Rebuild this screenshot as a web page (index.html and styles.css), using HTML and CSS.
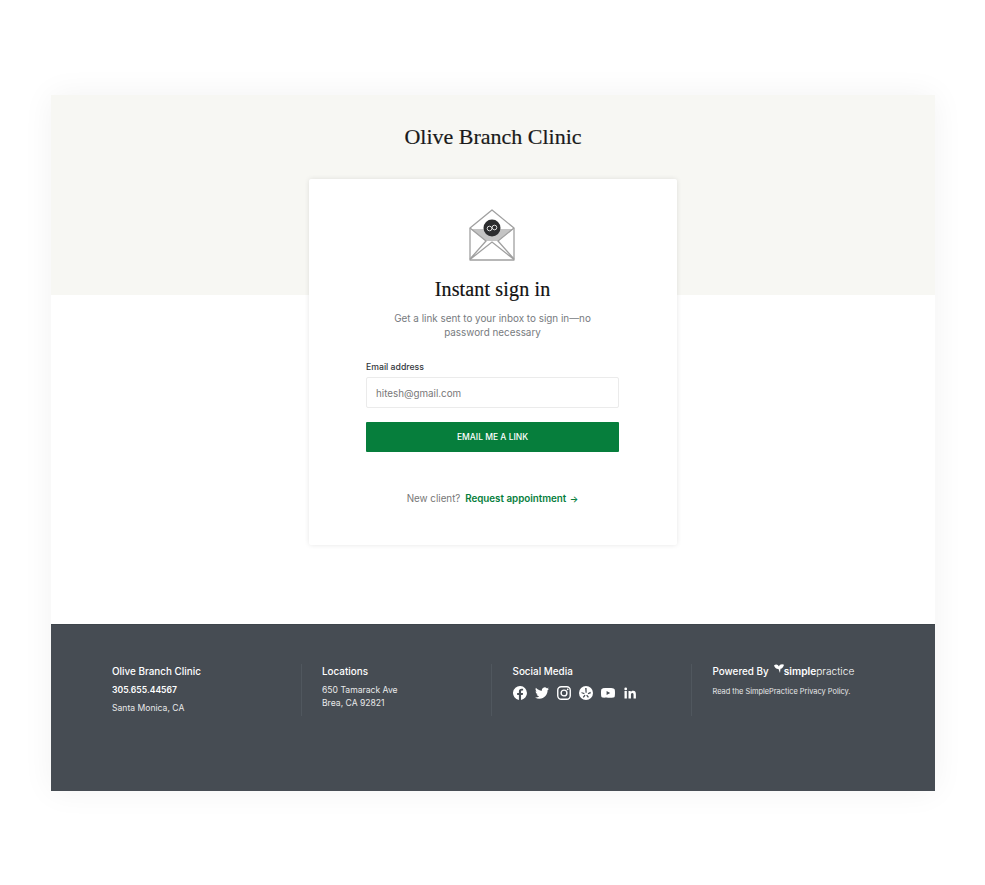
FILE: index.html
```html
<!DOCTYPE html>
<html lang="en">
<head>
<meta charset="utf-8">
<title>Olive Branch Clinic</title>
<link rel="stylesheet" href="styles.css">
</head>
<body>
<div class="frame">
  <header class="hero"><h2 class="clinic">Olive Branch Clinic</h2></header>
  <main class="main">
    <section class="card">
      <svg class="envelope" width="48" height="54" viewBox="0 0 48 54" fill="none">
        <path d="M2 20 24 2l22 18v32H2z" fill="#fff" stroke="#a0a0a0" stroke-width="1.300" stroke-linejoin="round"/>
        <path d="M2.500 21h43L30 33H18z" fill="#c4c4c4"/>
        <path d="M2 20 18 33 2 51M46 20 30 33l16 18M2 51.500 24 34l22 17.500" stroke="#a0a0a0" stroke-width="1.300"/>
        <circle cx="24" cy="20" r="8.500" fill="#2b2c2e"/>
        <circle cx="21.500" cy="20.500" r="2.300" stroke="#ddd" stroke-width="1"/>
        <circle cx="26.500" cy="19.500" r="2.300" stroke="#ddd" stroke-width="1"/>
      </svg>
      <h1 class="title">Instant sign in</h1>
      <p class="lead">Get a link sent to your inbox to sign in—no password necessary</p>
      <label class="label" for="email">Email address</label>
      <input class="input" id="email" type="text" value="hitesh@gmail.com">
      <button class="btn" type="button">EMAIL ME A LINK</button>
      <p class="new">New client? <a class="link" href="#">Request appointment <span class="arrow">→</span></a></p>
    </section>
  </main>
  <footer class="footer">
    <div class="col col-1">
      <div class="head">Olive Branch Clinic</div>
      <div class="phone">305.655.44567</div>
      <div class="city">Santa Monica, CA</div>
    </div>
    <div class="col col-2">
      <div class="head">Locations</div>
      <div class="addr">650 Tamarack Ave<br>Brea, CA 92821</div>
    </div>
    <div class="col col-3">
      <div class="head">Social Media</div>
      <div class="social">
        <svg class="ico" viewBox="0 0 24 24"><path fill="#fff" d="M24 12a12 12 0 1 0-13.900 11.900v-8.400H7.100V12h3V9.400c0-3 1.800-4.700 4.500-4.700 1.300 0 2.700.2 2.700.2v3h-1.500c-1.500 0-2 .9-2 1.900V12h3.400l-.5 3.500h-2.900v8.400A12 12 0 0 0 24 12z"/></svg>
        <svg class="ico" viewBox="0 0 24 24"><path fill="#fff" d="M23.950 4.570a10 10 0 0 1-2.820.77 4.960 4.960 0 0 0 2.160-2.720c-.95.550-2 .96-3.130 1.190a4.920 4.920 0 0 0-8.380 4.480C7.690 8.090 4.070 6.130 1.640 3.160a4.820 4.820 0 0 0-.67 2.480c0 1.710.87 3.210 2.190 4.100a4.900 4.900 0 0 1-2.230-.62v.06a4.920 4.920 0 0 0 3.950 4.830 4.900 4.900 0 0 1-2.210.08 4.940 4.940 0 0 0 4.600 3.420A9.870 9.870 0 0 1 0 19.540a13.940 13.940 0 0 0 7.550 2.210c9.050 0 14-7.500 14-13.980 0-.21 0-.42-.02-.63A9.940 9.940 0 0 0 24 4.590z"/></svg>
        <svg class="ico" viewBox="0 0 24 24" fill="none" stroke="#fff"><rect x="1.300" y="1.300" width="21.400" height="21.400" rx="6" stroke-width="2.400"/><circle cx="12" cy="12" r="5" stroke-width="2.400"/><circle cx="18.300" cy="5.700" r="1.500" fill="#fff" stroke="none"/></svg>
        <svg class="ico" viewBox="0 0 24 24"><circle cx="12" cy="12" r="12" fill="#fff"/><path d="M10.500 3.500h2.500l.2 8h-2zM4.500 10.500l5 1.500-.6 2-5-1.800zM19.500 10l-4.500 2.500.8 1.800 4.700-2zM9.500 15l1.700 1.200-3 4-1.800-1.400zM14 15l-1.700 1.200 3 4 1.800-1.400z" fill="#464c53"/></svg>
        <svg class="ico" viewBox="0 0 24 24"><path fill="#fff" d="M23.500 6.200a3 3 0 0 0-2.100-2.100C19.500 3.500 12 3.500 12 3.500s-7.500 0-9.400.6A3 3 0 0 0 .5 6.200C0 8.100 0 12 0 12s0 3.900.5 5.800a3 3 0 0 0 2.100 2.100c1.900.6 9.400.6 9.400.6s7.500 0 9.400-.6a3 3 0 0 0 2.100-2.100c.5-1.900.5-5.800.5-5.800s0-3.900-.5-5.800zM9.600 15.600V8.400l6.200 3.600z"/></svg>
        <svg class="ico ico-in" viewBox="0 0 24 24"><path fill="#fff" d="M1 8h4.700v15H1zM3.400 1a2.700 2.700 0 1 1 0 5.500 2.700 2.700 0 0 1 0-5.500zM9 8h4.500v2.100c.7-1.200 2.200-2.500 4.600-2.500 4.800 0 5.700 3.100 5.700 7.200V23h-4.700v-7.300c0-1.700 0-3.900-2.400-3.900s-2.800 1.900-2.800 3.800V23H9z"/></svg>
      </div>
    </div>
    <div class="col col-4">
      <div class="head powered">Powered By
        <span class="brand">
          <svg class="mark" width="11" height="10" viewBox="0 0 11 10"><path fill="#fff" d="M0 1.500C1.500-.2 4 .2 5 2.500 5.500.5 8-.5 10 .8 9.500 3 8 5 6.500 4.800L6 9 4.500 5C2.500 5.200.5 3.500 0 1.500z"/></svg><span class="brand-a">simple</span><span class="brand-b">practice</span>
        </span>
      </div>
      <div class="policy">Read the SimplePractice Privacy Policy.</div>
    </div>
  </footer>
</div>
</body>
</html>
```
FILE: styles.css
```css
* { box-sizing: border-box; }
html, body { margin: 0; background: #fff; }
body { padding: 95px 50px 94px 51px; font-family: Inter, "Liberation Sans", sans-serif; color: #464c53; }
.frame { width: 884px; box-shadow: 0 0 30px rgba(0,0,0,.055); display: flex; flex-direction: column; }
.hero { height: 200px; background: #f7f7f3; padding-top: 27px; text-align: center; }
.clinic { margin: 0; font: 400 22px/30px "Liberation Serif", serif; color: #1a1a1a; -webkit-text-stroke: .2px #1a1a1a; }
.main { height: 329px; background: #fff; }
.card { position: relative; width: 368px; height: 366px; margin: -116px auto 0 258px; background: #fff; border-radius: 2px; box-shadow: 0 0 5px rgba(0,0,0,.1); padding: 29px 58px 0 57px; display: flex; flex-direction: column; align-items: stretch; text-align: center; }
.envelope { display: block; margin: 0 auto; transform: translateX(-1px); }
.title { margin: 14px 0 0; font: 400 20px/26px "Liberation Serif", serif; color: #111; letter-spacing: .15px; -webkit-text-stroke: .2px #111; }
.lead { margin: 9px 20px 0; font-size: 9.900px; line-height: 14px; color: #777b80; }
.label { margin-top: 21px; text-align: left; font-size: 8.700px; line-height: 14px; font-weight: 500; color: #33383d; }
.input { margin-top: 3px; height: 31px; width: 100%; border: 1px solid #ebebeb; border-radius: 2px; padding: 1px 9px 0; font: 400 9.800px Inter, sans-serif; color: #777; outline: none; background: #fff; }
.btn { margin-top: 14px; height: 30px; width: 100%; border: 0; border-radius: 1px; background: #067e3c; color: #fff; font: 500 8.500px Inter, sans-serif; }
.new { margin: 40px 0 0; font-size: 9.800px; line-height: 14px; color: #777; }
.link { margin-left: 2px; color: #067e3c; font-weight: 600; text-decoration: none; }
.arrow { margin-left: 1px; font-size: 9px; }
.footer { height: 167px; background: #464c53; padding: 40px 0 0 61px; display: flex; align-items: flex-start; color: #fff; box-shadow: inset 0 1px 0 #3e454b; }
.col { height: 52px; font-size: 8.600px; color: #e8e9ea; }
.col-1 { width: 190px; border-right: 1px solid #50575e; }
.col-2 { width: 190px; padding-left: 20px; border-right: 1px solid #50575e; }
.col-3 { width: 200px; padding-left: 20.500px; border-right: 1px solid #50575e; }
.col-4 { padding-left: 20.500px; }
.head { font-size: 9.900px; line-height: 14px; font-weight: 500; color: #fff; }
.phone { margin-top: 6px; font-weight: 600; line-height: 13px; color: #fff; }
.city { margin-top: 5px; line-height: 13px; }
.addr { margin-top: 6px; line-height: 13px; }
.social { margin-top: 8px; display: flex; gap: 8px; }
.ico { width: 14px; height: 14px; display: block; }
.ico-in { width: 12px; height: 12px; margin: 1px 0 0 1px; }
.powered { display: flex; align-items: center; gap: 5px; }
.brand { display: inline-flex; align-items: center; }
.mark { margin: -5px -1px 0 0; }
.brand-a { font-size: 10.200px; font-weight: 600; }
.brand-b { font-size: 10.200px; font-weight: 300; }
.policy { margin-top: 8px; font-size: 7.400px; line-height: 12px; }
```
